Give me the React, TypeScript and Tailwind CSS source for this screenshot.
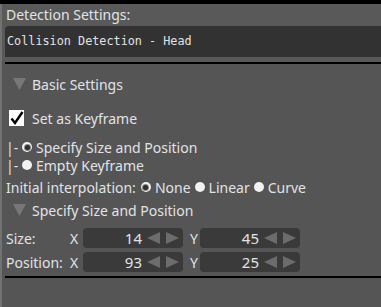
import React from "react"

function Tri() {
  return (
    <svg width="13" height="12" viewBox="0 0 13 12" className="shrink-0">
      <polygon points="0,0 13,0 6.5,12" fill="#777777" />
    </svg>
  )
}

function Radio({ on }: { on?: boolean }) {
  return (
    <span className="inline-flex h-[10px] w-[10px] shrink-0 items-center justify-center rounded-full bg-[#f2f2f2]">
      {on ? <span className="h-[5px] w-[5px] rounded-full bg-[#2e2e2e] shadow-[0_0_0_1px_#888]" /> : null}
    </span>
  )
}

function Arrows() {
  return (
    <div className="ml-[5px] flex items-center gap-[6px]">
      <svg width="13" height="12" viewBox="0 0 13 12">
        <polygon points="13,0 13,12 0,6" fill="#6c6c6c" />
      </svg>
      <svg width="13" height="12" viewBox="0 0 13 12">
        <polygon points="0,0 0,12 13,6" fill="#6c6c6c" />
      </svg>
    </div>
  )
}

function NumBox({ value }: { value: number }) {
  return (
    <div className="flex h-[20px] w-[100px] items-center rounded-[4px] bg-[#3a3a3a]">
      <span className="w-[59px] text-right text-[15px] leading-none">{value}</span>
      <Arrows />
    </div>
  )
}

function NumRow({ label, x, y }: { label: string; x: number; y: number }) {
  return (
    <div className="flex h-[20px] items-center pl-[4px]">
      <span className="w-[64px]">{label}</span>
      <span className="w-[13px]">X</span>
      <NumBox value={x} />
      <span className="ml-[7px] w-[10px]">Y</span>
      <NumBox value={y} />
    </div>
  )
}

export default function App() {
  return (
    <div className="flex h-[307px] w-[381px] flex-col overflow-hidden bg-[#555555] font-['Noto_Sans',sans-serif] text-[14px] text-[#e0e3e6]">
      <div className="h-[4px] shrink-0 bg-black" />
      <div className="flex flex-1">
        <div className="w-[2px] shrink-0 bg-[#727272]" />
        <div className="flex flex-1 flex-col">
          {/* header section */}
          <div className="flex flex-col bg-[#595959]">
            <div className="flex h-[22px] items-center pl-[4px] leading-none">Detection Settings:</div>
            <div className="ml-[3px] flex h-[31px] items-center rounded-tl-[4px] bg-[#323232] pl-[2px] font-['DejaVu_Sans_Mono',monospace] text-[11.8px]">
              Collision Detection - Head
            </div>
            <div className="h-[5px]" />
          </div>
          <div className="ml-[3px] h-[2px] bg-black" />

          <div className="flex h-[40px] items-center gap-[6px] pl-[11px]">
            <Tri />
            <span>Basic Settings</span>
          </div>

          <div className="flex h-[28px] items-center gap-[8px] pl-[7px]">
            <span className="flex h-[16px] w-[15px] items-center justify-center bg-white">
              <svg width="14" height="14" viewBox="0 0 14 14">
                <path d="M1.5 7.5 L5 12 L12.5 1" fill="none" stroke="black" strokeWidth="2.4" />
              </svg>
            </span>
            <span>Set as Keyframe</span>
          </div>

          <div className="mt-[6px] flex h-[18px] items-center pl-[4px]">
            <span className="w-[16px]">|-</span>
            <Radio on />
            <span className="ml-[4px]">Specify Size and Position</span>
          </div>
          <div className="flex h-[18px] items-center pl-[4px]">
            <span className="w-[16px]">|-</span>
            <Radio />
            <span className="ml-[4px]">Empty Keyframe</span>
          </div>

          <div className="mt-[4px] flex h-[18px] items-center pl-[4px]">
            <span>Initial interpolation:</span>
            <span className="ml-[5px] flex items-center gap-[4px]">
              <Radio on />
              <span>None</span>
            </span>
            <span className="ml-[4px] flex items-center gap-[4px]">
              <Radio />
              <span>Linear</span>
            </span>
            <span className="ml-[4px] flex items-center gap-[4px]">
              <Radio />
              <span>Curve</span>
            </span>
          </div>

          <div className="mt-[4px] flex h-[20px] items-center gap-[6px] pl-[11px]">
            <Tri />
            <span>Specify Size and Position</span>
          </div>

          <div className="mt-[8px]">
            <NumRow label="Size:" x={14} y={45} />
          </div>
          <div className="mt-[4px]">
            <NumRow label="Position:" x={93} y={25} />
          </div>

          <div className="ml-[3px] mt-[4px] h-[2px] bg-black" />
        </div>
      </div>
    </div>
  )
}
